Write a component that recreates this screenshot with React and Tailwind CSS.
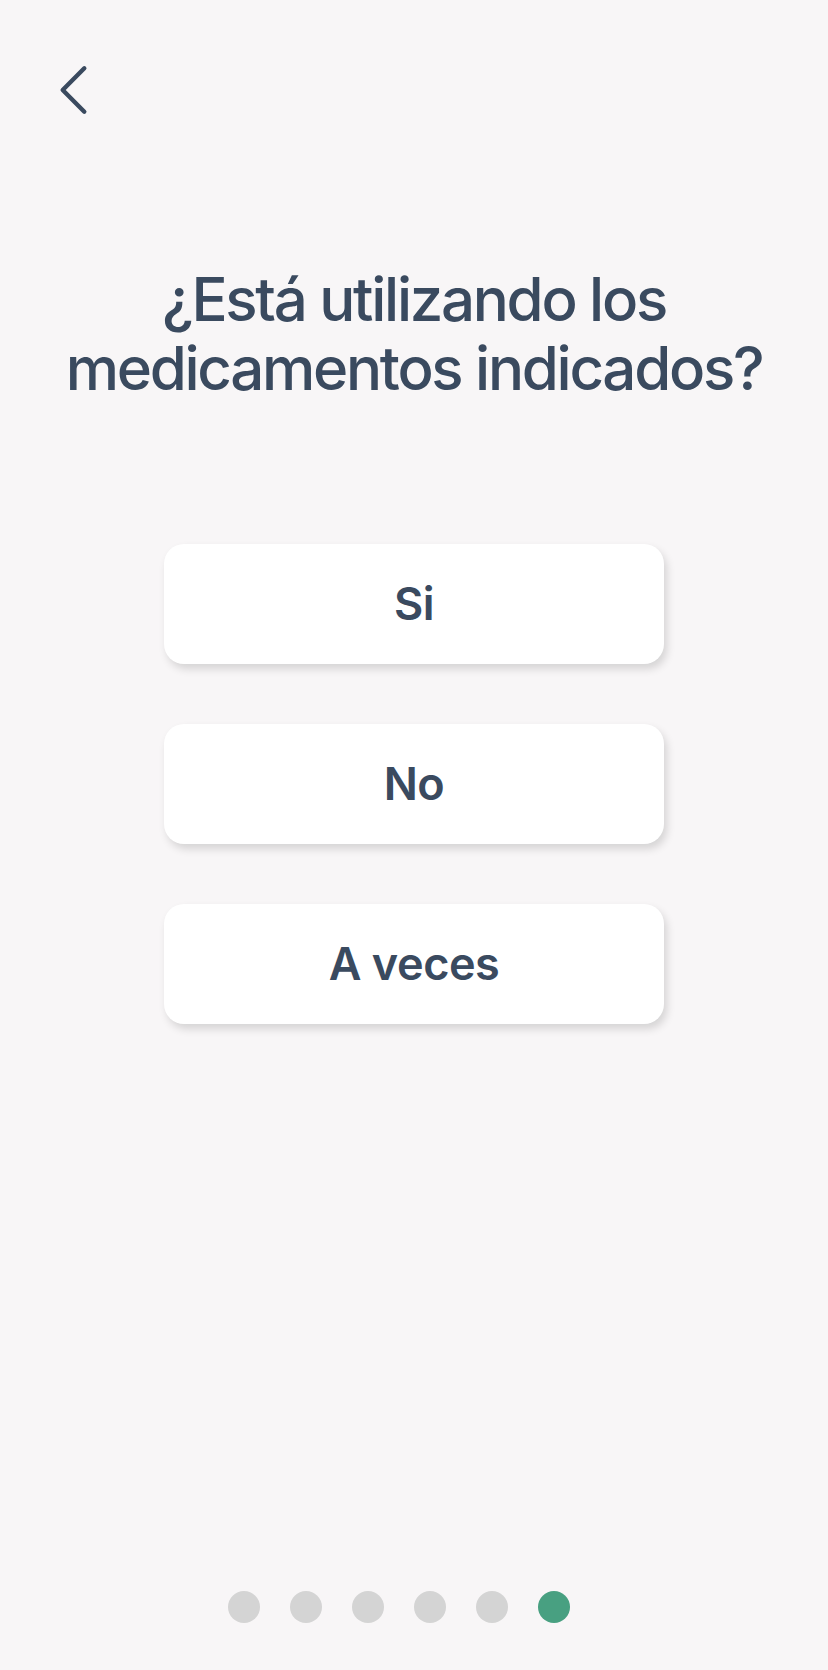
import React from 'react';

const options = ['Si', 'No', 'A veces'];

const BackChevron = () => (
  <svg width="30" height="52" viewBox="0 0 30 52" fill="none" className="block">
    <path d="M26.3 4.3 L4.7 26 L26.3 47.7" stroke="#3a4a5f" strokeWidth="4.4" strokeLinecap="round" strokeLinejoin="round" />
  </svg>
);

export default function App() {
  return (
    <div className="w-full h-[1670px] bg-[#f8f6f7] flex flex-col text-[#3a4a5f]" style={{ fontFamily: 'Inter, "Noto Sans", sans-serif' }}>
      {/* header */}
      <div className="pt-[64px] pl-[58px]">
        <button className="p-0 block">
          <BackChevron />
        </button>
      </div>

      {/* question */}
      <h1 className="mt-[149px] px-[40px] text-center text-[60px] leading-[69px] font-medium tracking-[-0.038em]">
        ¿Está utilizando los
        <br />
        medicamentos indicados?
      </h1>

      {/* answers */}
      <div className="mt-[141px] flex flex-col items-center gap-[60px]">
        {options.map((o) => (
          <button
            key={o}
            className="w-[500px] h-[120px] rounded-[20px] bg-white flex items-center justify-center text-[45px] font-semibold tracking-[-0.01em] shadow-[3px_5px_8px_rgba(0,0,0,0.14)]"
          >
            {o}
          </button>
        ))}
      </div>

      {/* progress dots */}
      <div className="mt-auto pb-[47px] flex justify-center gap-[30px] pr-[30px]">
        {[0, 1, 2, 3, 4].map((i) => (
          <span key={i} className="w-[32px] h-[32px] rounded-full bg-[#d4d4d4]" />
        ))}
        <span className="w-[32px] h-[32px] rounded-full bg-[#48a081]" />
      </div>
    </div>
  );
}
